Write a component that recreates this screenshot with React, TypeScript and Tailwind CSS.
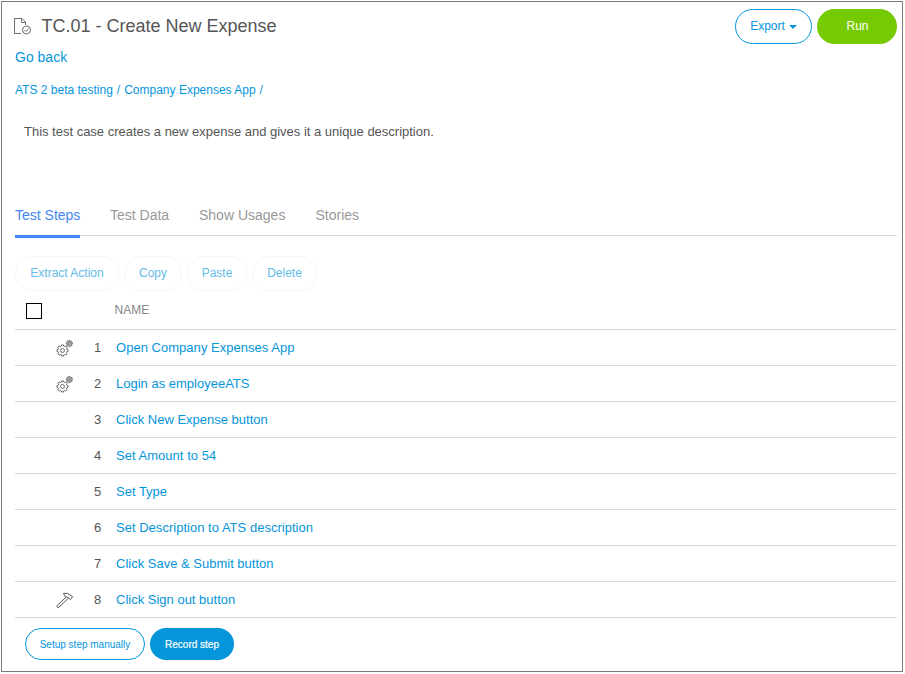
import React from "react";

const steps = [
  { name: "Open Company Expenses App", icon: "gears", tracking: "tracking-[0.03px]" },
  { name: "Login as employeeATS", icon: "gears", tracking: "tracking-normal" },
  { name: "Click New Expense button", icon: "", tracking: "tracking-normal" },
  { name: "Set Amount to 54", icon: "", tracking: "tracking-[0.03px]" },
  { name: "Set Type", icon: "", tracking: "tracking-normal" },
  { name: "Set Description to ATS description", icon: "", tracking: "tracking-[0.02px]" },
  { name: "Click Save & Submit button", icon: "", tracking: "tracking-normal" },
  { name: "Click Sign out button", icon: "hammer", tracking: "tracking-normal" },
];

const tabs = [
  { label: "Test Steps", width: "w-[65px]", active: true },
  { label: "Test Data", width: "w-[59px]", active: false },
  { label: "Show Usages", width: "w-[86.5px]", active: false },
  { label: "Stories", width: "w-[44px]", active: false },
];

const actions = [
  { label: "Extract Action", width: "w-[104px]" },
  { label: "Copy", width: "w-[58px]" },
  { label: "Paste", width: "w-[60px]" },
  { label: "Delete", width: "w-[65px]" },
];

function DocumentIcon() {
  return (
    <svg width="18" height="18" viewBox="0 0 18 18" fill="none" stroke="#6b6b6b" strokeWidth="1">
      <path d="M7 15.5H.5V.5H8L11.5 4v3M7.5.5v4h4" />
      <circle cx="12.5" cy="12" r="4" />
      <path d="M10.5 12l1.5 1.5 2.7-3" />
    </svg>
  );
}

function gearPath(cx: number, cy: number, outer: number, inner: number) {
  const points: string[] = [];
  for (let tooth = 0; tooth < 8; tooth++) {
    const base = (tooth * Math.PI) / 4;
    for (const [offset, radius] of [[-0.27, inner], [-0.18, outer], [0.18, outer], [0.27, inner]]) {
      const a = base + offset;
      points.push(`${(cx + radius * Math.cos(a)).toFixed(2)},${(cy + radius * Math.sin(a)).toFixed(2)}`);
    }
  }
  return `M${points.join("L")}Z`;
}

function GearsIcon() {
  return (
    <svg width="18" height="18" viewBox="0 0 18 18" fill="none" stroke="#666" strokeLinejoin="round">
      <path d={gearPath(6.5, 10.5, 5.6, 4.5)} strokeWidth="1" />
      <circle cx="6.5" cy="10.5" r="2" strokeWidth="0.9" />
      <path d={gearPath(13.4, 3.5, 3.1, 2.5)} fill="#aaa" strokeWidth="0.85" />
      <circle cx="13.4" cy="3.5" r="0.9" strokeWidth="0.6" fill="#ccc" />
    </svg>
  );
}

function HammerIcon() {
  return (
    <svg width="18" height="18" viewBox="0 0 18 18" fill="none" stroke="#555" strokeWidth="1" strokeLinejoin="round">
      <path d="M7.4 1.4H11.6L16.6 4.7 14.5 7.5 12.4 5.8 9.2 4.4Z" />
      <path d="M10.2 5L1.2 13.6Q.7 14.6 1.3 15.2 2.1 15.9 3 15.2L12.2 6.3" />
    </svg>
  );
}

export default function App() {
  return (
    <div className="h-[674px] w-[905px] bg-white pl-px pt-px font-['Liberation_Sans',Arial,sans-serif] text-[#555]">
      <main className="flex h-[671px] w-[902px] flex-col border border-[#7b7b7f] pl-[13px] pr-[5px]">
        <header className="flex h-[42px] shrink-0 justify-between pt-[7px]">
          <div className="-ml-px flex">
            <div className="mt-[9px]"><DocumentIcon /></div>
            <h1 className="ml-[9.5px] mt-[5px] whitespace-nowrap text-[18px] leading-6">TC.01 - Create New Expense</h1>
          </div>
          <div className="flex gap-[5px]">
            <button className="flex h-[35px] w-[77px] items-center justify-center gap-1 rounded-full border border-[#0595db] pb-0.5 text-xs text-[#0595db]">
              Export
              <span className="mt-0.5 border-x-4 border-t-4 border-x-transparent border-t-[#0595db]" />
            </button>
            <button className="h-[35px] w-20 rounded-full bg-[#76ca02] pb-0.5 pl-px text-xs text-white">Run</button>
          </div>
        </header>
        <a className="mt-[3px] h-5 shrink-0 text-sm leading-5 text-[#0595db]">Go back</a>
        <nav className="mt-[13px] flex h-5 shrink-0 gap-1 text-xs leading-5 text-[#0595db]">
          <a>ATS 2 beta testing</a><span>/</span><a>Company Expenses App</a><span>/</span>
        </nav>
        <p className="ml-[9px] mt-[22px] h-5 shrink-0 text-[13px] leading-5 tracking-[-0.01px]">This test case creates a new expense and gives it a unique description.</p>
        <div className="mt-[61px] flex h-[33px] shrink-0 gap-[30px] border-b border-[#d7d7d7] text-sm leading-5">
          {tabs.map((t) => (
            <button key={t.label} className={`${t.width} h-[35px] whitespace-nowrap text-left ${t.active ? "border-b-3 border-[#4285f4] pb-[9px] text-[#4285f4]" : "pb-3 text-[#999]"}`}>
              {t.label}
            </button>
          ))}
        </div>
        <div className="mt-5 flex h-[35px] shrink-0 gap-[5px]">
          {actions.map((a) => (
            <button key={a.label} className={`${a.width} rounded-full border border-[#f6f6f6] pb-0.5 text-xs text-[#62bce8]`}>{a.label}</button>
          ))}
        </div>
        <div className="flex h-[39px] shrink-0 items-start border-b border-[#d7d7d7]">
          <span className="ml-[11px] mt-3 size-4 border border-black" />
          <span className="ml-[72.5px] mt-[9px] text-xs leading-5 text-[#888]">NAME</span>
        </div>
        {steps.map((s, i) => (
          <div key={s.name} className="flex h-9 shrink-0 items-center border-b border-[#d7d7d7] text-[13px]">
            <span className="ml-[41px] w-[38px] pt-0.5">{s.icon === "gears" ? <GearsIcon /> : s.icon === "hammer" ? <HammerIcon /> : null}</span>
            <span className="w-[22px]">{i + 1}</span>
            <a className={`${s.tracking} whitespace-nowrap text-[#0595db]`}>{s.name}</a>
          </div>
        ))}
        <footer className="ml-2.5 mt-2.5 flex h-8 shrink-0 gap-[5px] text-[10px]">
          <button className="w-[120px] rounded-full border border-[#0595db] text-[#0595db]">Setup step manually</button>
          <button className="w-[84px] rounded-full bg-[#0595db] text-white [-webkit-text-stroke:0.2px_white]">Record step</button>
        </footer>
      </main>
    </div>
  );
}
